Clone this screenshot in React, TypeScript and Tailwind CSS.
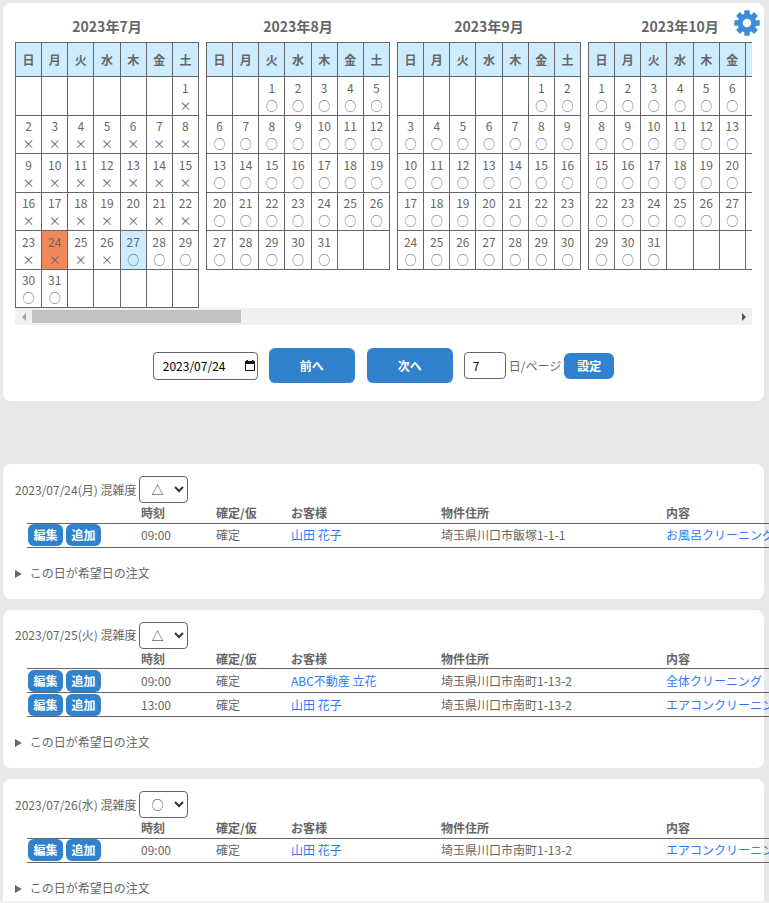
import { useRef, useState } from 'react';
import { clsx } from 'clsx';

interface Month {
  year: number;
  month: number;
  firstWeekday: number;
  days: number;
}

interface Order {
  time: string;
  status: string;
  customer: string;
  address: string;
  content: string;
}

interface Day {
  date: string;
  weekday: string;
  congestion: string;
  orders: Order[];
}

const WEEKDAYS = ['日', '月', '火', '水', '木', '金', '土'];

const months: Month[] = [
  { year: 2023, month: 7, firstWeekday: 6, days: 31 },
  { year: 2023, month: 8, firstWeekday: 2, days: 31 },
  { year: 2023, month: 9, firstWeekday: 5, days: 30 },
  { year: 2023, month: 10, firstWeekday: 0, days: 31 },
];

const days: Day[] = [
  {
    date: '2023/07/24',
    weekday: '月',
    congestion: '△',
    orders: [
      { time: '09:00', status: '確定', customer: '山田 花子', address: '埼玉県川口市飯塚1-1-1', content: 'お風呂クリーニング' },
    ],
  },
  {
    date: '2023/07/25',
    weekday: '火',
    congestion: '△',
    orders: [
      { time: '09:00', status: '確定', customer: 'ABC不動産 立花', address: '埼玉県川口市南町1-13-2', content: '全体クリーニング' },
      { time: '13:00', status: '確定', customer: '山田 花子', address: '埼玉県川口市南町1-13-2', content: 'エアコンクリーニング' },
    ],
  },
  {
    date: '2023/07/26',
    weekday: '水',
    congestion: '○',
    orders: [
      { time: '09:00', status: '確定', customer: '山田 花子', address: '埼玉県川口市南町1-13-2', content: 'エアコンクリーニング' },
    ],
  },
];

const GearIcon = () => (
  <svg viewBox="0 0 26 26" className="size-[26px]" fill="#3b8bdb" aria-hidden="true">
    {[0, 45, 90, 135].map(angle => (
      <rect key={angle} x="10.3" y="0.3" width="5.4" height="25.4" rx="0.3" transform={`rotate(${angle} 13 13)`} />
    ))}
    <circle cx="13" cy="13" r="9.4" />
    <circle cx="13" cy="13" r="4.3" fill="#fff" />
  </svg>
);

const CalendarIcon = () => (
  <svg viewBox="0 0 10 11" className="h-[11px] w-[10px]" aria-hidden="true">
    <path d="M1.500 0H3v1h4V0h1.500v1h.7a.8.8 0 0 1 .8.8v8.400a.8.8 0 0 1-.8.8H.8a.8.8 0 0 1-.8-.8V1.800A.8.8 0 0 1 .8 1h.7zM1 4v6h8V4z" fill="#111" />
  </svg>
);

const MonthCalendar = ({ year, month, firstWeekday, days }: Month) => {
  const weeks = Math.ceil((firstWeekday + days) / 7);

  return (
    <table className="w-[184px] shrink-0 table-fixed border-collapse text-center">
      <caption className="h-[27px] text-sm leading-[22px] font-bold">
        {year}年{month}月
      </caption>
      <thead>
        <tr className="h-[34px] bg-[#cdecff]">
          {WEEKDAYS.map(name => (
            <th key={name} className="border border-[#666] p-0 font-bold">{name}</th>
          ))}
        </tr>
      </thead>
      <tbody>
        {Array.from({ length: weeks }, (_, week) => (
          <tr key={week} className="odd:h-[39px] even:h-[38px]">
            {WEEKDAYS.map((name, weekday) => {
              const day = week * 7 + weekday - firstWeekday + 1;
              const inMonth = day >= 1 && day <= days;
              const closed = month === 7 && day < 27;
              return (
                <td
                  key={name}
                  className={clsx(
                    'border border-[#666] p-0 pt-px',
                    month === 7 && day === 24 && 'bg-[#f0885a]',
                    month === 7 && day === 27 && 'bg-[#cdecff]',
                  )}
                >
                  {inMonth && (
                    <>
                      <div>{day}</div>
                      <div>{closed ? '×' : '○'}</div>
                    </>
                  )}
                </td>
              );
            })}
          </tr>
        ))}
      </tbody>
    </table>
  );
};

const ScrollBar = ({ onScroll }: { onScroll: (offset: number) => void }) => (
  <div className="flex h-[17px] items-center bg-[#f0f0f0]">
    <button type="button" aria-label="左へ" onClick={() => onScroll(-191)} className="flex w-[17px] justify-center">
      <svg viewBox="0 0 4 8" className="h-2 w-1" fill="#a3a3a3"><path d="M4 0v8L0 4z" /></svg>
    </button>
    <div className="flex-1">
      <div className="h-[13px] w-[209px] bg-[#c1c1c1]" />
    </div>
    <button type="button" aria-label="右へ" onClick={() => onScroll(191)} className="flex w-[17px] justify-center">
      <svg viewBox="0 0 4 8" className="h-2 w-1" fill="#505050"><path d="M0 0v8l4-4z" /></svg>
    </button>
  </div>
);

const DayPanel = ({ day }: { day: Day }) => {
  const [congestion, setCongestion] = useState(day.congestion);
  const selectId = `congestion-${day.date}`;

  return (
    <section className="rounded-lg bg-white p-3 pb-[17px]">
      <div className="flex items-center gap-[2px]">
        <label htmlFor={selectId}>
          {day.date}({day.weekday}) 混雑度
        </label>
        <select
          id={selectId}
          value={congestion}
          onChange={e => setCongestion(e.target.value)}
          className="h-[27px] w-[49px] rounded border border-[#666] bg-white pl-2 text-[#333]"
        >
          <option>○</option>
          <option>△</option>
          <option>×</option>
        </select>
      </div>

      <table className="ml-3 w-[864px] table-fixed border-collapse text-left">
        <thead>
          <tr className="h-5 border-b border-[#666]">
            <th className="w-[114px] p-0"></th>
            <th className="w-[75px] p-0 pt-px font-bold">時刻</th>
            <th className="w-[75px] p-0 pt-px font-bold">確定/仮</th>
            <th className="w-[150px] p-0 pt-px font-bold">お客様</th>
            <th className="w-[225px] p-0 pt-px font-bold">物件住所</th>
            <th className="w-[225px] p-0 pt-px font-bold">内容</th>
          </tr>
        </thead>
        <tbody>
          {day.orders.map(order => (
            <tr key={order.time} className="h-6 border-b border-[#666]">
              <td className="p-0">
                <div className="flex gap-[3px] pl-px">
                  <button type="button" className="h-[22px] w-[35px] rounded-md bg-[#3182ce] font-bold text-white">編集</button>
                  <button type="button" className="h-[22px] w-[35px] rounded-md bg-[#3182ce] font-bold text-white">追加</button>
                </div>
              </td>
              <td className="p-0">{order.time}</td>
              <td className="p-0">{order.status}</td>
              <td className="p-0"><a href="#" className="text-[#2b7bff]">{order.customer}</a></td>
              <td className="p-0">{order.address}</td>
              <td className="p-0"><a href="#" className="text-[#2b7bff]">{order.content}</a></td>
            </tr>
          ))}
        </tbody>
      </table>

      <details className="mt-4">
        <summary><span className="ml-0.5">この日が希望日の注文</span></summary>
      </details>
    </section>
  );
};

const App = () => {
  const [date, setDate] = useState('2023/07/24');
  const [perPage, setPerPage] = useState('7');
  const calendars = useRef<HTMLDivElement>(null);

  return (
    <div className="flex h-screen flex-col bg-[#e8e8e8] font-['Noto_Sans_CJK_JP',sans-serif] text-xs leading-[18px] text-[#666]">
      <main className="flex-1 overflow-auto pt-[3px] pr-[5px] pl-[3px] [scrollbar-width:none]">
        <section className="relative rounded-lg bg-white p-3 pb-[18px]">
          <div ref={calendars} className="flex items-start gap-[7px] overflow-x-auto [scrollbar-width:none]">
            {months.map(month => (
              <MonthCalendar key={month.month} {...month} />
            ))}
          </div>
          <ScrollBar onScroll={offset => calendars.current?.scrollBy({ left: offset })} />

          <button type="button" aria-label="カレンダー設定" className="absolute top-[7px] right-1">
            <GearIcon />
          </button>

          <div className="mt-[23px] flex items-center justify-center">
            <div className="relative">
              <input
                aria-label="日付"
                value={date}
                onChange={e => setDate(e.target.value)}
                className="block h-7 w-[105px] rounded border border-[#666] pl-[9px] text-black"
              />
              <span className="absolute top-2 right-[3px]">
                <CalendarIcon />
              </span>
            </div>
            <button type="button" className="ml-[11px] h-[35px] w-[86px] rounded-md bg-[#3182ce] font-bold text-white">前へ</button>
            <button type="button" className="ml-3 h-[35px] w-[86px] rounded-md bg-[#3182ce] font-bold text-white">次へ</button>
            <input
              id="per-page"
              value={perPage}
              onChange={e => setPerPage(e.target.value)}
              className="ml-[11px] h-[27px] w-[42px] rounded border border-[#666] pl-2 text-black"
            />
            <label htmlFor="per-page" className="ml-[3px]">日/ページ</label>
            <button type="button" className="ml-[3px] h-[26px] w-[50px] rounded-md bg-[#3182ce] font-bold text-white">設定</button>
          </div>
        </section>

        <div className="mt-[63px] flex flex-col gap-[11px]">
          {days.map(day => (
            <DayPanel key={day.date} day={day} />
          ))}
        </div>
      </main>
      <div className="h-0.5 bg-[#f0f0f0]" />
    </div>
  );
};

export default App;
